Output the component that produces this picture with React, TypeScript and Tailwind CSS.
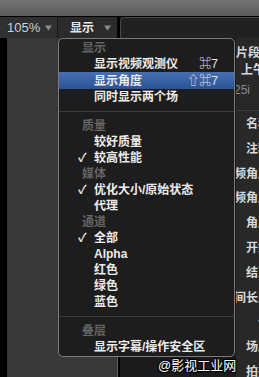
import React from 'react'

type Row =
  | { kind: 'header'; label: string }
  | { kind: 'item'; label: string; checked?: boolean; shortcut?: string; active?: boolean }
  | { kind: 'sep' }

const menu: Row[] = [
  { kind: 'header', label: '显示' },
  { kind: 'item', label: '显示视频观测仪', shortcut: '⌘7' },
  { kind: 'item', label: '显示角度', shortcut: '⇧⌘7', active: true },
  { kind: 'item', label: '同时显示两个场' },
  { kind: 'sep' },
  { kind: 'header', label: '质量' },
  { kind: 'item', label: '较好质量' },
  { kind: 'item', label: '较高性能', checked: true },
  { kind: 'header', label: '媒体' },
  { kind: 'item', label: '优化大小/原始状态', checked: true },
  { kind: 'item', label: '代理' },
  { kind: 'header', label: '通道' },
  { kind: 'item', label: '全部', checked: true },
  { kind: 'item', label: 'Alpha' },
  { kind: 'item', label: '红色' },
  { kind: 'item', label: '绿色' },
  { kind: 'item', label: '蓝色' },
  { kind: 'sep' },
  { kind: 'header', label: '叠层' },
  { kind: 'item', label: '显示字幕/操作安全区' },
]

const labels = ['名称', '注释', '视频角度', '视频角度', '角度', '开始', '结束', '时间长度', '◇', '场序', '拍摄']

const font = '"Liberation Sans","Noto Sans CJK SC",sans-serif'

function Caret() {
  return (
    <svg width="7" height="6" viewBox="0 0 7 6">
      <path d="M0 0.5h7L3.5 5.5z" fill="#8c8c8c" />
    </svg>
  )
}

function MenuRow({ row }: { row: Row }) {
  if (row.kind === 'sep') {
    return <div className="h-[13px] pt-[6px]"><div className="h-px bg-[#3c3c3c]" /></div>
  }
  if (row.kind === 'header') {
    return (
      <div className="flex h-[16px] items-center pl-[23px] text-[12px] font-bold text-[#646464]">
        {row.label}
      </div>
    )
  }
  return (
    <div
      className={
        'relative flex items-center pr-[16px] text-[12px] font-bold text-[#ececec] ' +
        (row.active ? 'h-[17px] bg-gradient-to-b from-[#4770b4] to-[#2b5294]' : 'h-[16px]')
      }
    >
      {row.checked && <span className="absolute left-[19px] text-[12px] text-[#e8e8e8]">✓</span>}
      <span className="pl-[35px]">{row.label}</span>
      {row.shortcut && <span className="ml-auto font-normal text-[#e4e4e4]">{row.shortcut}</span>}
    </div>
  )
}

export default function App() {
  return (
    <div className="relative flex h-[377px] w-[259px] flex-col overflow-hidden bg-[#1c1c1c]" style={{ fontFamily: font }}>
      {/* window title gradient */}
      <div className="h-[16px] shrink-0 bg-gradient-to-b from-[#747474] to-[#5a5a5a]" />
      <div className="h-px shrink-0 bg-black" />

      {/* toolbar */}
      <div className="flex h-[21px] shrink-0">
        <div className="flex w-[57px] items-center bg-[#303030] pl-[7px] pr-[5px] text-[13px] text-[#cfcfcf]">
          <span>105%</span>
          <span className="ml-auto"><Caret /></span>
        </div>
        <div className="w-px bg-[#161616]" />
        <div className="flex w-[59px] items-center bg-[#2b2b2b] pl-[12px] pr-[6px] text-[12px] font-bold text-[#e6e6e6]">
          <span>显示</span>
          <span className="ml-auto"><Caret /></span>
        </div>
        <div className="w-[3px] bg-black" />
        <div className="flex-1 rounded-tl-[5px] border-l border-t border-[#4a4a4a] bg-[#212121]" />
      </div>

      {/* body */}
      <div className="flex flex-1">
        <div className="w-[7px] bg-black" />
        <div className="w-[110px] bg-[#383838]" />
        <div className="w-px bg-[#5e5e5e]" />
        <div className="w-[2px] bg-black" />
        <div className="w-[116px] bg-[#1b1b1b]" />
        <div className="flex flex-1 flex-col overflow-hidden bg-[#282828] text-[12px] font-bold text-[#d8d8d8]">
          <div className="mt-[7px] flex h-[16px] w-[24px] shrink-0 items-center justify-end whitespace-nowrap">视频片段</div>
          <div className="mt-px flex h-[16px] items-center whitespace-nowrap pl-[5px]">上午 10:32</div>
          <div className="mt-[4px] flex h-[16px] items-center whitespace-nowrap font-normal text-[#8a8a8a]">
            <span className="-ml-[2px]">25i</span>
          </div>
          <div className="mt-[12px] h-px bg-[#3a3a3a]" />
          <div className="mt-[5px] flex flex-col gap-[8.8px]">
            {labels.map((l, i) => (
              <div key={i} className="flex h-[16px] w-[34px] shrink-0 items-center justify-end whitespace-nowrap">
                {l}
              </div>
            ))}
          </div>
        </div>
      </div>

      {/* dropdown menu */}
      <div className="absolute left-[58px] top-[38px] h-[319px] w-[177px] rounded-[5px] border border-[#7a7a7a] bg-[#1d1d1d] pt-px">
        {menu.map((r, i) => (
          <MenuRow key={i} row={r} />
        ))}
      </div>

      {/* watermark */}
      <div
        className="absolute left-[158px] top-[357px] text-[13px] leading-[17px] text-white"
        style={{ textShadow: '0 0 1px #000, 1px 1px 1px #000, -1px -1px 1px #000, 1px -1px 1px #000, -1px 1px 1px #000' }}
      >
        @影视工业网
      </div>
    </div>
  )
}
